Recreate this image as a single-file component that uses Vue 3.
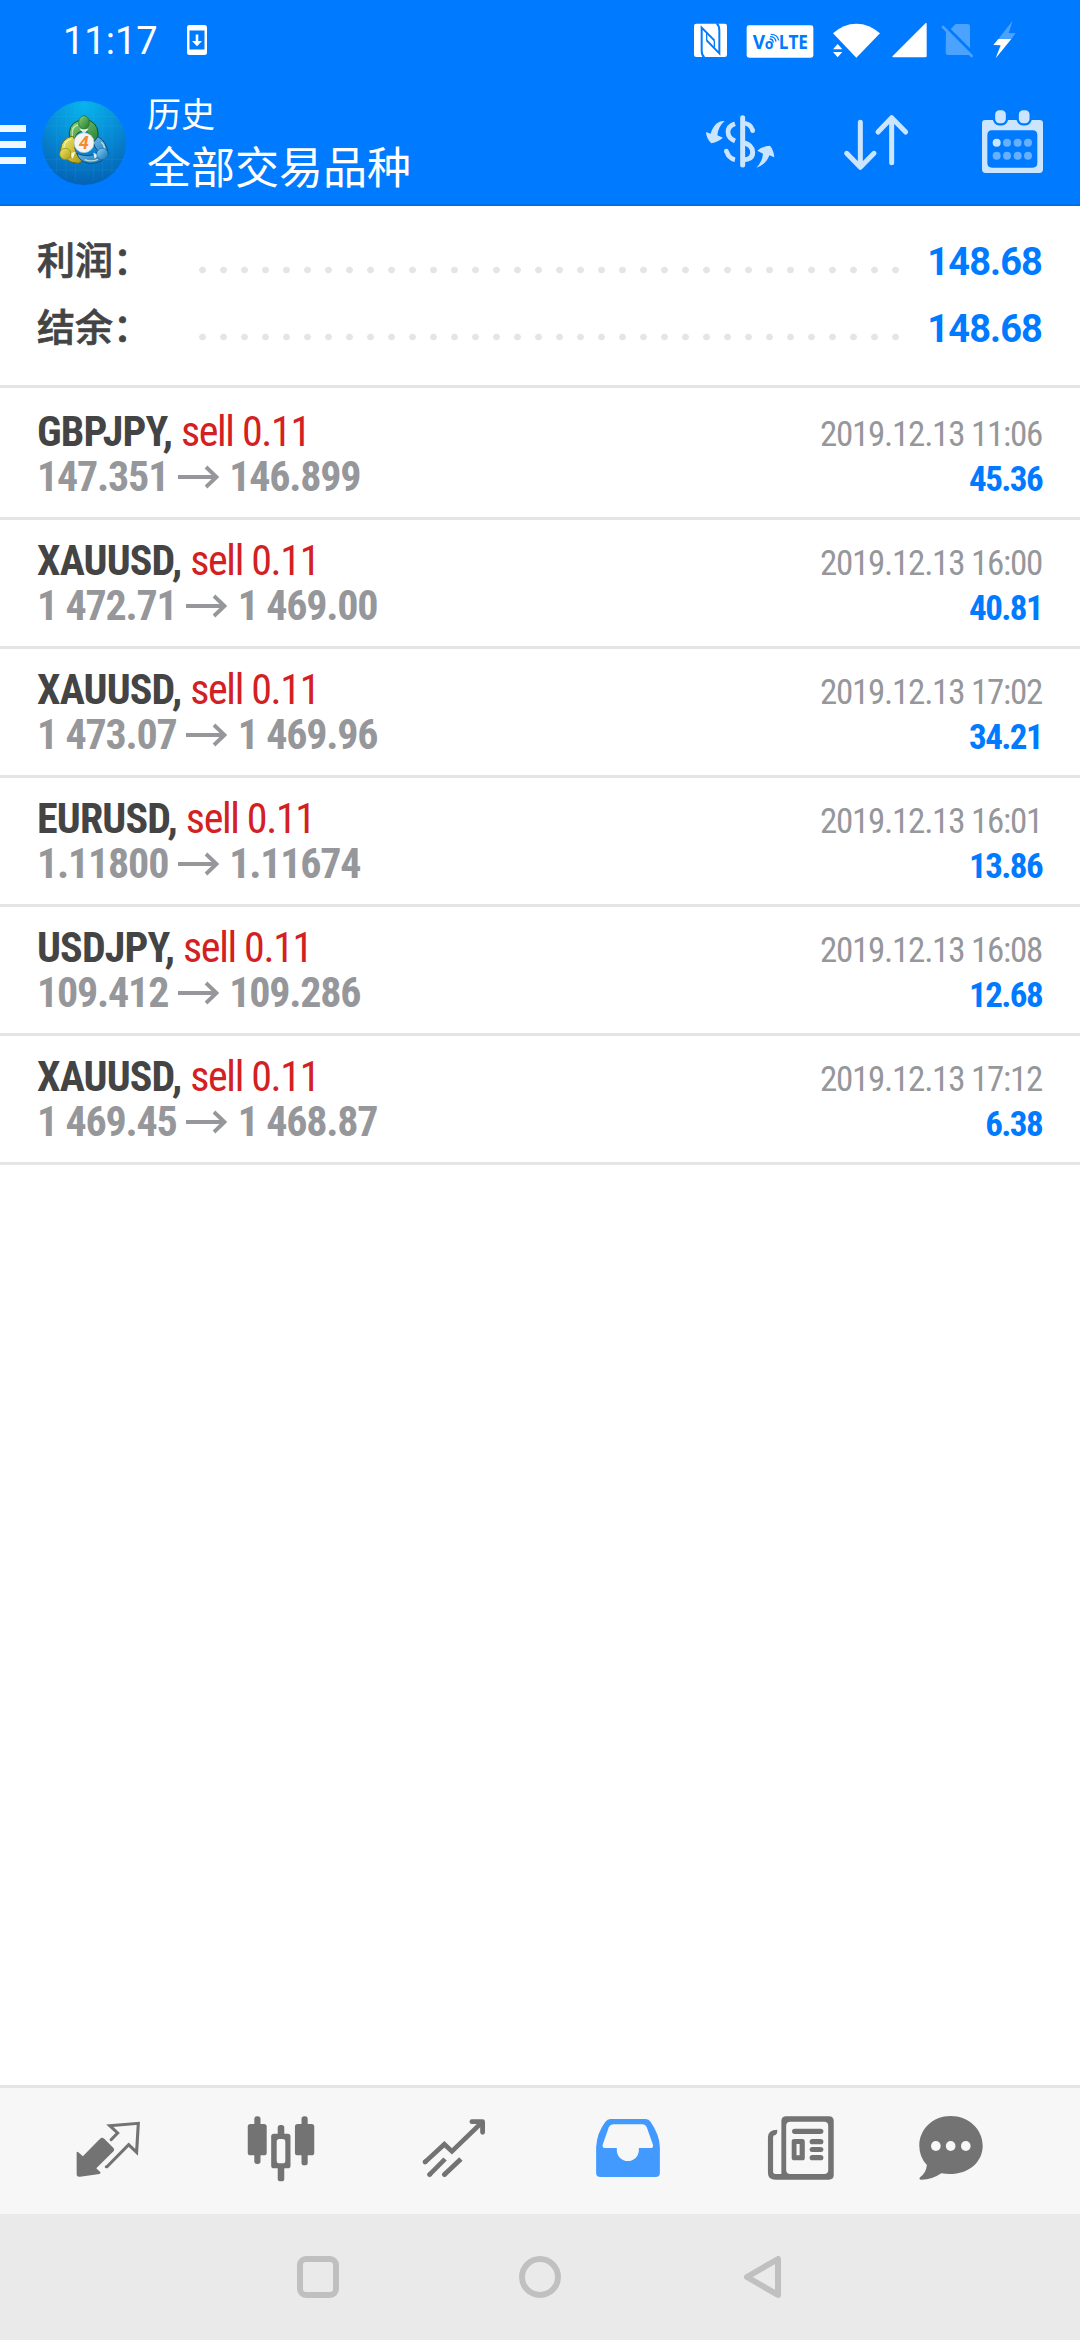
<script setup>
const summary = [
  { label: '利润：', value: '148.68' },
  { label: '结余：', value: '148.68' },
]

const deals = [
  { symbol: 'GBPJPY', side: 'sell 0.11', open: '147.351', close: '146.899', time: '2019.12.13 11:06', profit: '45.36' },
  { symbol: 'XAUUSD', side: 'sell 0.11', open: '1 472.71', close: '1 469.00', time: '2019.12.13 16:00', profit: '40.81' },
  { symbol: 'XAUUSD', side: 'sell 0.11', open: '1 473.07', close: '1 469.96', time: '2019.12.13 17:02', profit: '34.21' },
  { symbol: 'EURUSD', side: 'sell 0.11', open: '1.11800', close: '1.11674', time: '2019.12.13 16:01', profit: '13.86' },
  { symbol: 'USDJPY', side: 'sell 0.11', open: '109.412', close: '109.286', time: '2019.12.13 16:08', profit: '12.68' },
  { symbol: 'XAUUSD', side: 'sell 0.11', open: '1 469.45', close: '1 468.87', time: '2019.12.13 17:12', profit: '6.38' },
]
</script>

<template>
  <div class="screen">
    <header class="top">
      <div class="status">
        <span class="clock">11:17</span>
        <svg class="update" viewBox="0 0 20 30" width="20" height="30">
          <path fill="#fff" fill-rule="evenodd" d="M2.5 0h15a2.5 2.5 0 0 1 2.5 2.5v25a2.5 2.5 0 0 1-2.5 2.5h-15A2.5 2.5 0 0 1 0 27.500v-25A2.500 2.500 0 0 1 2.500 0zM2.500 5.500v19h15v-19z" />
          <path fill="#fff" d="M8.700 9.500h2.600v6.500h3.700l-5 5.200-5-5.200h3.700z" />
        </svg>
        <div class="status-icons">
          <svg viewBox="42 60 105 120" width="35" height="40">
            <rect x="45" y="71" width="99" height="100" rx="7" fill="#fff" />
            <path d="M76 172Q68 166 68 152V83L106 121M113 70Q121 77 121 92V160L83 121" fill="none" stroke="#007bff" stroke-width="6" />
            <path d="M83 98V122M106 121V143" fill="none" stroke="#007bff" stroke-width="4" />
            <path d="M83 133L121 170" fill="none" stroke="#fff" stroke-width="3" />
          </svg>
          <svg class="gap-lg" viewBox="201 60 204 120" width="68" height="40">
            <rect x="203" y="76" width="200" height="97" rx="7" fill="#fff" />
            <g class="volte">
              <text x="221" y="147" font-size="57" textLength="38">V</text>
              <text x="257" y="147" font-size="42" textLength="25">o</text>
              <text x="299" y="147" font-size="57" textLength="88" lengthAdjust="spacingAndGlyphs">LTE</text>
            </g>
            <path d="M272 117Q282 117 283 128M273 110Q289 110 291 125M275 103Q296 103 299 121" fill="none" stroke="#007bff" stroke-width="4" />
          </svg>
          <svg class="gap-lg" viewBox="459 60 147 120" width="49" height="40">
            <path fill="#fff" d="M462 100Q493 71 532 71T603 100L532 173z" />
            <path fill="#fff" d="M462 148L476 132L490 148zM462 156H490L476 172z" />
          </svg>
          <svg class="gap-sm" viewBox="636 60 111 120" width="37" height="40">
            <path fill="#fff" d="M740 69Q743 68 743 72V168Q743 172 739 172H642Q638 171 641 168z" />
          </svg>
          <svg class="gap-md" viewBox="786 60 99 120" width="33" height="40">
            <path fill="#4ca3ff" d="M830 72H866Q873 72 873 79V145L815 87zM801 90L872 161Q870 165 866 165H808Q800 165 800 157z" />
            <path d="M792 81L878 168" stroke="#4ca3ff" stroke-width="8" stroke-linecap="round" />
          </svg>
          <svg class="gap-lg" viewBox="936 60 75 120" width="25" height="40">
            <path fill="#4ca3ff" d="M998 62L955 117H994L1007 100L986 99z" />
            <path fill="#fff" d="M955 117L940 135L962 136L947 175L994 117z" />
          </svg>
        </div>
      </div>

      <div class="bar">
        <div class="menu"><i></i><i></i><i></i></div>
        <svg class="logo" viewBox="36 33 252 252" width="84" height="84">
          <defs>
            <radialGradient id="disc" cx=".5" cy=".05" r=".95">
              <stop offset="0" stop-color="#08b4ee" />
              <stop offset=".55" stop-color="#0787d2" />
              <stop offset="1" stop-color="#0462b4" />
            </radialGradient>
            <linearGradient id="green" x2="1" y2="1">
              <stop offset="0" stop-color="#8ad07b" /><stop offset="1" stop-color="#1d7a2c" />
            </linearGradient>
            <linearGradient id="yellow" x2="1" y2="1">
              <stop offset="0" stop-color="#f4ea62" /><stop offset="1" stop-color="#a89a18" />
            </linearGradient>
            <linearGradient id="blue" x2="1" y2="1">
              <stop offset="0" stop-color="#8cd2f6" /><stop offset="1" stop-color="#1270b4" />
            </linearGradient>
          </defs>
          <circle cx="162" cy="159" r="126" fill="url(#disc)" />
          <path d="M80 70V250M108 50V268M136 45V275M190 45V275M218 50V268M246 70V250M60 80H262M45 108H280M40 240H260M40 208H284" stroke="#3cc0f0" stroke-width="1.500" opacity=".25" />
          <g stroke-linejoin="round">
            <path d="M119 146Q112 104 145 92H180Q210 106 203 148L188 164Q180 120 162 124Q138 124 136 145z" fill="url(#green)" stroke="#10561f" stroke-width="3" />
            <path d="M128 138Q94 146 92 178Q100 218 146 220L160 210Q126 188 135 150z" fill="url(#yellow)" stroke="#716b13" stroke-width="3" />
            <path d="M204 140Q230 154 234 190Q220 222 178 220Q148 216 140 190Q176 206 206 186Q192 170 190 158z" fill="url(#blue)" stroke="#0c4f8c" stroke-width="3" />
            <path d="M127 138Q124 108 144 105M102 174Q103 151 124 147M214 157Q224 165 224 176M164 209Q184 217 204 208" fill="none" stroke="#e4f9d8" stroke-width="4" opacity=".7" />
            <path d="M148 116H176L162 132zM118 190L136 186L128 206zM190 188L206 194L194 206z" fill="#fff" opacity=".85" />
          </g>
          <ellipse cx="162" cy="97" rx="16" ry="20" fill="url(#green)" stroke="#18692a" stroke-width="2" />
          <circle cx="106" cy="192" r="17" fill="url(#yellow)" stroke="#8b8118" stroke-width="2" />
          <circle cx="217" cy="192" r="17" fill="url(#blue)" stroke="#1669a8" stroke-width="2" />
          <circle cx="162" cy="158" r="30" fill="#f4f4f4" stroke="#b9c4c4" stroke-width="2" />
          <text class="four" x="161" y="177" font-size="54" text-anchor="middle">4</text>
        </svg>
        <div class="titles">
          <div class="subtitle">历史</div>
          <div class="title">全部交易品种</div>
        </div>
        <div class="actions">
          <svg viewBox="72 327 216 198" width="72" height="66">
            <g fill="none" stroke="#cce5ff">
              <path d="M188 353V495" stroke-width="15" stroke-linecap="round" />
              <path d="M165 371Q144 378 144 396T165 423" stroke-width="14" />
              <path d="M140 454Q145 475 165 479" stroke-width="14" />
              <path d="M139 453V454M218 391V392" stroke-width="14" stroke-linecap="round" />
              <path d="M218 392Q213 371 190 369" stroke-width="14" />
              <path d="M188 427Q218 434 218 457T188 479" stroke-width="15" />
            </g>
            <path fill="#cce5ff" d="M134 363Q115 362 103 378Q95 389 92 401L78 396Q79 416 94 430Q114 426 129 413L112 406Q114 380 134 363zM229 503Q247 485 249 461L232 452Q249 438 270 437Q281 450 283 472L268 466Q259 493 229 503z" />
          </svg>
          <svg viewBox="486 327 204 198" width="68" height="66">
            <path d="M541 367V500M500 460L541 502L582 460M635 488V355M594 396L635 353L677 396" fill="none" stroke="#cce5ff" stroke-width="15" stroke-linecap="round" stroke-linejoin="round" />
          </svg>
          <svg viewBox="900 327 195 198" width="65" height="66">
            <path fill="#cce5ff" fill-rule="evenodd" d="M916 360H1079Q1089 360 1089 370V508Q1089 519 1078 519H917Q906 519 906 508V370Q906 360 916 360zM936 391Q922 391 922 405V489Q922 503 936 503H1058Q1072 503 1072 489V405Q1072 391 1058 391z" />
            <g fill="#cce5ff" stroke="#007bff" stroke-width="7">
              <rect x="942" y="327" width="39" height="46" rx="16" />
              <rect x="1013" y="327" width="39" height="46" rx="16" />
            </g>
            <circle cx="950" cy="428" r="12" fill="#cce5ff" />
            <g fill="#66b0ff">
              <circle cx="981" cy="428" r="12" /><circle cx="1013" cy="428" r="12" /><circle cx="1044" cy="428" r="12" />
              <circle cx="950" cy="467" r="12" /><circle cx="981" cy="467" r="12" /><circle cx="1013" cy="467" r="12" /><circle cx="1044" cy="467" r="12" />
            </g>
          </svg>
        </div>
      </div>
    </header>

    <main class="content">
      <section class="summary">
        <div v-for="item in summary" :key="item.label" class="sum-row">
          <span class="sum-label">{{ item.label }}</span>
          <span class="dots"></span>
          <span class="sum-value">{{ item.value }}</span>
        </div>
      </section>

      <ul class="deals">
        <li v-for="(d, i) in deals" :key="i" class="deal">
          <div class="left">
            <div class="line"><b>{{ d.symbol }},</b> <span class="sell">{{ d.side }}</span></div>
            <div class="line prices">
              <span>{{ d.open }}</span>
              <svg class="arrow" viewBox="0 0 42 24" width="42" height="24">
                <path d="M0 12H38M28 2L38.500 12L28 22" fill="none" stroke="#96979b" stroke-width="3.800" />
              </svg>
              <span>{{ d.close }}</span>
            </div>
          </div>
          <div class="right">
            <div class="time">{{ d.time }}</div>
            <div class="profit">{{ d.profit }}</div>
          </div>
        </li>
      </ul>
    </main>

    <nav class="tabs">
      <div class="tab">
        <svg viewBox="207.500 135 209 216" width="72" height="72" preserveAspectRatio="none">
          <path fill="#737373" d="M221 247Q222 243 226 247L239 259L289 206Q295 200 301 206L328 234Q332 239 328 244L278 295L290 307Q292 311 287 312L231 320Q221 322 221 312z" />
          <path fill="none" stroke="#737373" stroke-width="9" stroke-linecap="round" stroke-linejoin="miter" d="M307 290H309L372 224L395 247L400 160L317 167L340 189L321 209" />
        </svg>
      </div>
      <div class="tab">
        <svg viewBox="709 135 209 216" width="72" height="72" preserveAspectRatio="none">
          <g fill="#737373">
            <rect x="717" y="162" width="55" height="94" rx="8" /><rect x="736" y="139" width="18" height="143" rx="8" />
            <rect x="854" y="162" width="56" height="94" rx="8" /><rect x="873" y="139" width="18" height="147" rx="8" />
            <rect x="785" y="191" width="56" height="104" rx="8" /><rect x="804" y="165" width="19" height="169" rx="8" />
          </g>
          <rect x="801" y="207" width="25" height="73" rx="8" fill="#f7f7f7" />
        </svg>
      </div>
      <div class="tab">
        <svg viewBox="1211.500 135 209 216" width="72" height="72" preserveAspectRatio="none">
          <g fill="none" stroke="#737373" stroke-width="14">
            <path stroke-linecap="round" d="M1232 276L1233 275M1245 314L1246 313M1288 314L1289 313M1399 187V155H1368" stroke-linejoin="round" />
            <path d="M1231 277L1288 223L1310 244L1397 157M1244 315L1290 267M1287 315L1336 267" />
          </g>
        </svg>
      </div>
      <div class="tab">
        <svg viewBox="149 135 209 216" width="72" height="72" preserveAspectRatio="none">
          <path fill="#429aff" fill-rule="evenodd" d="M202 147H305Q314 147 319 155Q346 196 346 232V308Q346 321 333 321H174Q161 321 161 308V232Q163 188 188 155Q194 147 202 147zM211 163Q202 163 198 171L180 224Q178 234 188 234H221V241A32 32 0 0 0 285 241V234H319Q328 234 326 224L308 172Q304 163 295 163z" />
        </svg>
      </div>
      <div class="tab">
        <svg viewBox="655.500 135 209 216" width="72" height="72" preserveAspectRatio="none">
          <g fill="#737373" fill-rule="evenodd">
            <path d="M717 139H841Q855 139 855 153V315Q855 329 841 329H686Q664 329 664 308V202Q664 179 691 179V187Q689 195 686 195Q679 195 679 202V304Q679 312 686 312H703V153Q703 139 717 139zM729 155Q717 155 717 167V300Q717 312 729 312H827Q839 312 839 300V167Q839 155 827 155z" />
            <rect x="734" y="176" width="91" height="16" rx="8" />
            <path d="M741 207H764Q771 207 771 214V263Q771 271 764 271H741Q733 271 733 263V214Q733 207 741 207zM747 222V256H756V222z" />
            <rect x="785" y="207" width="40" height="16" rx="8" /><rect x="785" y="231" width="40" height="15" rx="8" /><rect x="785" y="255" width="40" height="16" rx="8" />
          </g>
        </svg>
      </div>
      <div class="tab last">
        <svg viewBox="1089.500 135 209 216" width="72" height="72" preserveAspectRatio="none">
          <path fill="#737373" d="M1193 138C1245 138 1286 178 1286 227C1286 281 1236 322 1166 310Q1138 330 1106 329Q1099 327 1105 321Q1122 308 1124 285Q1102 261 1102 227C1102 178 1141 138 1193 138z" />
          <g fill="#f7f7f7"><ellipse cx="1150" cy="228" rx="14" ry="15" /><ellipse cx="1193" cy="228" rx="14" ry="15" /><ellipse cx="1237" cy="228" rx="14" ry="15" /></g>
        </svg>
      </div>
    </nav>

    <footer class="system">
      <svg viewBox="0 0 42 42" width="42" height="42"><rect x="3" y="3" width="36" height="36" rx="6" /></svg>
      <svg viewBox="0 0 42 42" width="42" height="42"><circle cx="21" cy="21" r="18" /></svg>
      <svg viewBox="0 0 42 42" width="42" height="42"><path d="M37 3V39L6 21z" /></svg>
    </footer>
  </div>
</template>

<style>
body {
  margin: 0;
}
</style>

<style scoped>
.screen {
  display: flex;
  flex-direction: column;
  width: 1080px;
  height: 2340px;
  background: #fff;
  overflow: hidden;
  font-family: Roboto, "Noto Sans CJK SC", sans-serif;
}
svg {
  display: block;
  flex: none;
}
.top {
  height: 206px;
  box-sizing: border-box;
  background: #007bff;
  border-bottom: 2px solid #0070e8;
  color: #fff;
}
.status {
  display: flex;
  height: 80px;
  padding: 0 63px 0 63px;
}
.clock {
  width: 124px;
  font-size: 38px;
  line-height: 82px;
}
.update {
  margin-top: 25px;
}
.status-icons {
  display: flex;
  margin: 20px 0 0 auto;
}
.gap-lg {
  margin-left: 18px;
}
.gap-md {
  margin-left: 13px;
}
.gap-sm {
  margin-left: 10px;
}
.volte {
  font-family: "Open Sans", "Noto Sans", sans-serif;
  font-weight: 700;
  fill: #007bff;
}
.bar {
  display: flex;
  height: 124px;
}
.menu {
  display: flex;
  flex-direction: column;
  gap: 9px;
  width: 26px;
  margin: 45px 16px 0 0;
}
.menu i {
  height: 7px;
  background: #f0f7ff;
}
.logo {
  margin-top: 21px;
}
.four {
  font-family: Roboto, sans-serif;
  font-weight: 700;
  font-style: italic;
  fill: #f58a2c;
}
.titles {
  margin: 10px 0 0 21px;
  white-space: nowrap;
}
.subtitle {
  font-size: 34px;
  line-height: 51px;
}
.title {
  font-size: 44px;
  line-height: 56px;
}
.actions {
  display: flex;
  gap: 66px;
  margin: 29px 35px 0 auto;
}
.actions svg + svg + svg {
  margin-left: 4px;
}
.content {
  flex: 1;
}
.summary {
  height: 179px;
  padding: 23px 37px 0;
  box-sizing: border-box;
}
.sum-row {
  display: flex;
  height: 67px;
  font-size: 38px;
  line-height: 67px;
}
.sum-label {
  width: 155px;
  color: #444;
  font-weight: 500;
  line-height: 65px;
  -webkit-text-stroke: 0.7px #444;
}
.dots {
  width: 714px;
  background: radial-gradient(circle at 50% 50%, #e5e5e5 3px, transparent 3.700px) 0 31px / 21px 20px repeat-x;
}
.sum-value {
  margin: 0 1px 0 auto;
  color: #007bff;
  font-weight: 700;
  letter-spacing: -0.900px;
}
.deals {
  margin: 0;
  padding: 3px 0 0;
  list-style: none;
  border-top: 3px solid #e5e5e5;
}
.deal {
  display: flex;
  justify-content: space-between;
  height: 129px;
  box-sizing: border-box;
  padding: 18px 38px 0 37px;
  border-bottom: 3px solid #e5e5e5;
  font-stretch: 75%;
  font-family: "Roboto Condensed", Roboto, sans-serif;
  white-space: nowrap;
}
.line {
  height: 45px;
  font-size: 42px;
  line-height: 45px;
  color: #444;
  letter-spacing: -0.850px;
}
.sell {
  color: #d32022;
  letter-spacing: -1.350px;
}
.prices {
  display: flex;
  align-items: center;
  gap: 9.500px;
  color: #96979b;
  font-weight: 700;
  letter-spacing: -1.200px;
}
.right {
  padding-top: 3px;
  text-align: right;
  font-size: 35px;
  line-height: 45px;
}
.time {
  color: #96979b;
  letter-spacing: -1.250px;
}
.profit {
  color: #007bff;
  font-weight: 700;
  letter-spacing: -1.600px;
}
.tabs {
  display: flex;
  height: 129px;
  box-sizing: border-box;
  padding-left: 21px;
  border-top: 3px solid #e5e5e5;
  background: #f7f7f7;
}
.tab {
  display: flex;
  align-items: center;
  justify-content: center;
  width: 173.400px;
}
.last {
  width: 127px;
}
.system {
  display: flex;
  align-items: center;
  justify-content: center;
  gap: 180px;
  height: 126px;
  background: #eaeaea;
}
.system svg {
  fill: none;
  stroke: #c0c0c0;
  stroke-width: 6;
  stroke-linejoin: round;
}
</style>
